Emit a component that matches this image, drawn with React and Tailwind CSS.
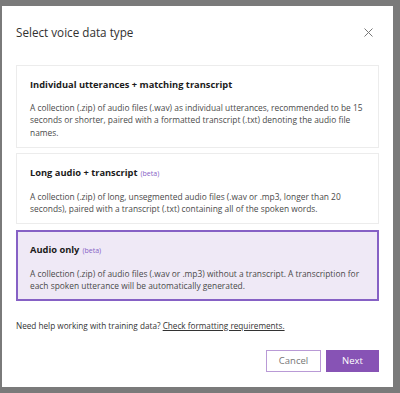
import React from 'react';

const options = [
  {
    title: 'Individual utterances + matching transcript',
    beta: false,
    desc: 'A collection (.zip) of audio files (.wav) as individual utterances, recommended to be 15 seconds or shorter, paired with a formatted transcript (.txt) denoting the audio file names.',
    h: 'h-[83px]',
  },
  {
    title: 'Long audio + transcript',
    beta: true,
    desc: 'A collection (.zip) of long, unsegmented audio files (.wav or .mp3, longer than 20 seconds), paired with a transcript (.txt) containing all of the spoken words.',
    h: 'h-[71px]',
  },
  {
    title: 'Audio only',
    beta: true,
    desc: 'A collection (.zip) of audio files (.wav or .mp3) without a transcript. A transcription for each spoken utterance will be automatically generated.',
    h: 'h-[71px]',
    selected: true,
  },
];

function OptionCard({ opt }) {
  const box = opt.selected
    ? 'border-2 border-[#8661c5] bg-[#efe9f6] px-[12px] pt-[11px]'
    : 'border border-[#ececec] bg-white px-[13px] pt-[12px]';
  return (
    <div className={`w-[363px] ${opt.h} ${box}`}>
      <div className="text-[9.3px] leading-[14px] font-bold text-[#1b1b1b]">
        {opt.title}
        {opt.beta && <span className="ml-[3px] text-[7px] font-normal text-[#8661c5]">(beta)</span>}
      </div>
      <p className="mt-[10px] text-[8.4px] leading-[12.3px] text-[#4a4a4a]">{opt.desc}</p>
    </div>
  );
}

export default function App() {
  return (
    <div
      className="w-[400px] h-[393px] bg-[#7a7a7a] pl-[2px] pt-[6px] overflow-hidden"
      style={{ fontFamily: '"Open Sans", "Noto Sans", sans-serif' }}
    >
      <div className="w-[391px] h-[381px] bg-white px-[14px]">
        {/* header */}
        <div className="flex items-center justify-between h-[52px] pt-[1px]">
          <h2 className="text-[11.7px] text-[#323130]">Select voice data type</h2>
          <svg width="9" height="9" viewBox="0 0 9 9" className="mr-[6px]">
            <path d="M0.5 0.5 L8.5 8.5 M8.5 0.5 L0.5 8.5" stroke="#777" strokeWidth="1" />
          </svg>
        </div>

        <div className="mt-[7px] flex flex-col gap-[5px]">
          <OptionCard opt={options[0]} />
          <OptionCard opt={options[1]} />
          <div className="mt-[1px]">
            <OptionCard opt={options[2]} />
          </div>
        </div>

        <p className="mt-[19px] text-[8.2px] text-[#333]">
          Need help working with training data?{' '}
          <a className="underline text-[#333]">Check formatting requirements.</a>
        </p>

        <div className="mt-[18px] flex justify-end gap-[5px]">
          <button className="w-[55px] h-[22px] border border-[#b99ad6] text-[9.5px] text-[#767676] bg-white">
            Cancel
          </button>
          <button className="w-[53px] h-[22px] bg-[#8753b5] text-[9.5px] text-white">Next</button>
        </div>
      </div>
    </div>
  );
}
